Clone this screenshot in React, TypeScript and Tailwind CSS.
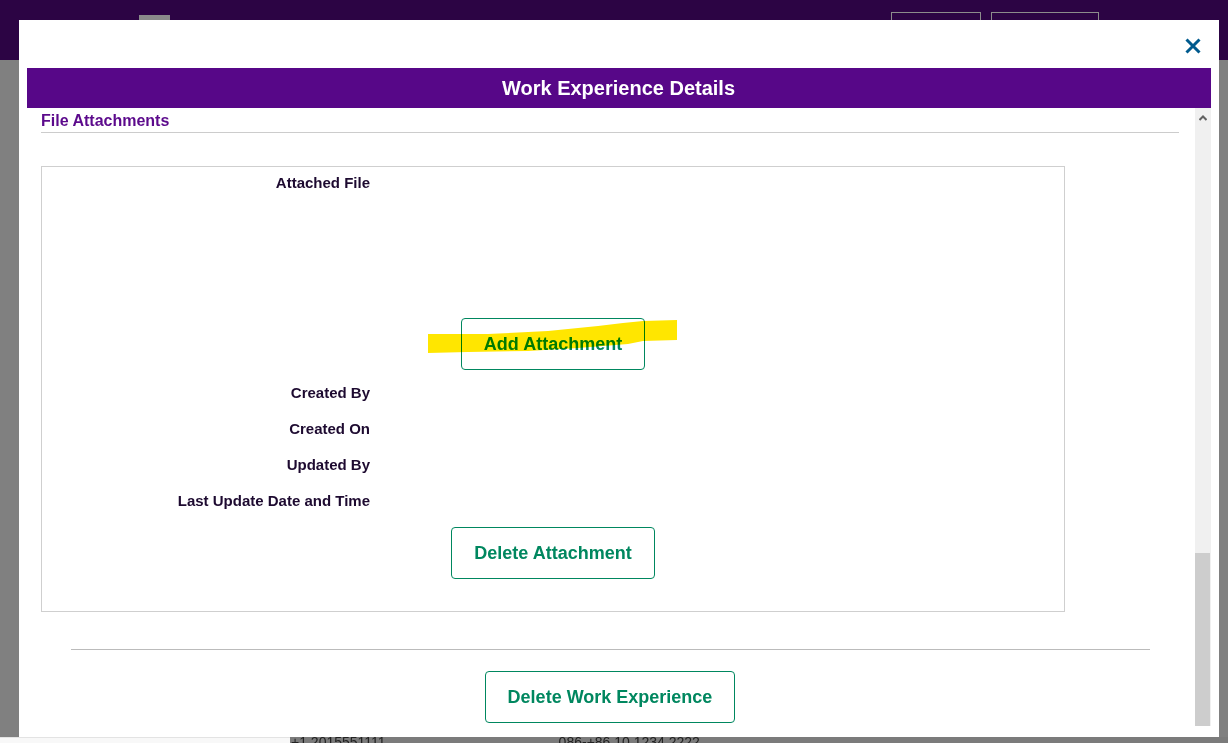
import React from "react"

const labelCls = "w-[328px] text-right text-[15px] font-bold leading-[18px] text-[#1d0a30]"
const btnCls =
  "h-[52px] rounded-[4px] border border-[#00875f] bg-white text-[18px] font-bold text-[#00875f] flex items-center justify-center"

function MetaRow({ label }: { label: string }) {
  return (
    <div className="flex h-[36px] items-center">
      <div className={labelCls}>{label}</div>
    </div>
  )
}

export default function App() {
  return (
    <div className="relative h-[743px] w-[1228px] overflow-hidden bg-[#808080] font-['Liberation_Sans',Arial,sans-serif]">
      {/* page behind the overlay */}
      <div className="flex h-[743px] flex-col">
        <div className="flex h-[60px] items-start bg-[#2c0444]">
          <div className="ml-[139px] mt-[15px] h-[10px] w-[31px] bg-[#8a8a8a]" />
          <div className="ml-auto mr-[129px] mt-[12px] flex gap-[10px]">
            <div className="h-[30px] w-[90px] border border-[#8c8c8c]" />
            <div className="h-[30px] w-[108px] border border-[#8c8c8c]" />
          </div>
        </div>
        <div className="flex-1" />
        <div className="flex h-[6px]">
          <div className="w-[290px] border-t border-[#e3e3e3] bg-[#f8f8f8]" />
          <div className="flex flex-1 bg-[#7b7b7b] text-[14px] leading-[16px] text-[#222]">
            <span className="ml-[1px] mt-[-3px]">+1 2015551111</span>
            <span className="ml-[173px] mt-[-3px]">086-+86 10 1234 2222</span>
          </div>
        </div>
      </div>

      {/* modal */}
      <div className="absolute left-[19px] top-[20px] flex h-[717px] w-[1200px] flex-col bg-white">
        <div className="flex h-[48px] items-start justify-end">
          <svg className="mr-[18px] mt-[18px]" width="16" height="16" viewBox="0 0 16 16">
            <path d="M1.5 1.5 L14.5 14.5 M14.5 1.5 L1.5 14.5" stroke="#005a8e" strokeWidth="3" />
          </svg>
        </div>
        <div className="flex flex-1 flex-col px-[8px] pb-[11px]">
          <div className="flex h-[40px] items-center justify-center bg-[#570788] pl-[-1px] text-[20px] font-bold text-white">
            <span className="mr-[1px]">Work Experience Details</span>
          </div>
          <div className="flex flex-1">
            <div className="flex-1 overflow-hidden pl-[14px] pr-[16px]">
              <div className="border-b border-[#cccccc] pb-[2px] pt-[4px] text-[16px] font-bold leading-[18px] text-[#5c0a8c]">
                File Attachments
              </div>
              <div className="mt-[33px] h-[446px] w-[1024px] border border-[#cfcfcf] pt-[7px]">
                <div className="flex h-[18px] items-center">
                  <div className={labelCls}>Attached File</div>
                </div>
                <div className="h-[126px]" />
                <div className="flex justify-center">
                  <button className={`${btnCls} w-[184px]`}>Add Attachment</button>
                </div>
                <div className="mt-[5px]">
                  <MetaRow label="Created By" />
                  <MetaRow label="Created On" />
                  <MetaRow label="Updated By" />
                  <MetaRow label="Last Update Date and Time" />
                </div>
                <div className="mt-[8px] flex justify-center">
                  <button className={`${btnCls} w-[204px]`}>Delete Attachment</button>
                </div>
              </div>
              <div className="ml-[30px] mt-[37px] w-[1079px] border-t border-[#bbbbbb]" />
              <div className="mt-[21px] flex justify-center">
                <button className={`${btnCls} w-[250px]`}>Delete Work Experience</button>
              </div>
            </div>
            <div className="flex w-[16px] flex-col bg-[#f0f0f0]">
              <svg className="ml-[4px] mt-[7px]" width="8" height="6" viewBox="0 0 8 6">
                <path d="M0.5 5 L4 1.5 L7.5 5" stroke="#606060" strokeWidth="2" fill="none" />
              </svg>
              <div className="mt-auto h-[173px] w-[15px] bg-[#cdcdcd]" />
            </div>
          </div>
        </div>
      </div>

      {/* yellow marker annotation */}
      <svg
        className="pointer-events-none absolute left-[428px] top-[318px] mix-blend-multiply"
        width="250"
        height="36"
        viewBox="0 0 250 36"
      >
        <polygon
          points="0,16 60,16 120,13 170,8 195,5 215,3 249,2 249,22 215,23 200,26 150,30 100,33 40,34 0,35"
          fill="#ffe600"
        />
      </svg>
    </div>
  )
}
